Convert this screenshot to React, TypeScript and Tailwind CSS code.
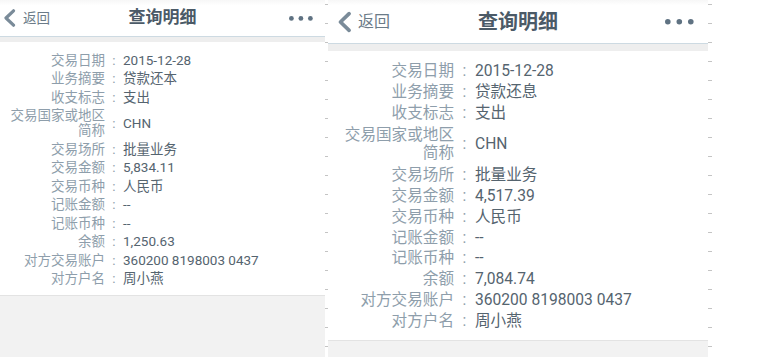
import React from "react";

type Row = { label: string[]; value: string };

const rowsA: Row[] = [
  { label: ["交易日期"], value: "2015-12-28" },
  { label: ["业务摘要"], value: "贷款还本" },
  { label: ["收支标志"], value: "支出" },
  { label: ["交易国家或地区", "简称"], value: "CHN" },
  { label: ["交易场所"], value: "批量业务" },
  { label: ["交易金额"], value: "5,834.11" },
  { label: ["交易币种"], value: "人民币" },
  { label: ["记账金额"], value: "--" },
  { label: ["记账币种"], value: "--" },
  { label: ["余额"], value: "1,250.63" },
  { label: ["对方交易账户"], value: "360200 8198003 0437" },
  { label: ["对方户名"], value: "周小燕" },
];

const rowsB: Row[] = rowsA.map((r, i) =>
  i === 1
    ? { ...r, value: "贷款还息" }
    : i === 5
    ? { ...r, value: "4,517.39" }
    : i === 9
    ? { ...r, value: "7,084.74" }
    : r
);

const font = { fontFamily: 'Roboto, "Noto Sans CJK SC", sans-serif' };

function Ticks() {
  return (
    <div className="flex flex-col gap-[18px] pt-[4px]">
      {Array.from({ length: 19 }).map((_, i) => (
        <div key={i} className="h-px w-[4px] bg-[#c4c4c4]" />
      ))}
    </div>
  );
}

function Chevron({ w, h }: { w: number; h: number }) {
  return (
    <svg width={w} height={h} viewBox="0 0 13 18">
      <path
        d="M10.5 1.8 L3 9 L10.5 16.2"
        fill="none"
        stroke="#7a8b99"
        strokeWidth="3.2"
        strokeLinecap="round"
        strokeLinejoin="round"
      />
    </svg>
  );
}

function Dots({ w, r, gap }: { w: number; r: number; gap: number }) {
  return (
    <svg width={w} height={r * 2 + 2} viewBox={`0 0 ${w} ${r * 2 + 2}`}>
      {[0, 1, 2].map((i) => (
        <circle key={i} cx={r + 1 + i * gap} cy={r + 1} r={r} fill="#5f7282" />
      ))}
    </svg>
  );
}

function PanelSmall() {
  return (
    <div className="flex h-[357px] w-[325px] flex-col bg-[#f2f2f2]" style={font}>
      <div className="flex h-[37px] items-center bg-white bg-gradient-to-b from-[#f7f7f7] to-white to-[15%] border-b border-[#cddae2]">
        <div className="flex w-[100px] items-center pl-[3px]">
          <Chevron w={13} h={18} />
          <span className="ml-[7px] text-[13.5px] text-[#6b7b88]">返回</span>
        </div>
        <div className="flex-1 text-center text-[17px] font-bold text-[#4b5a67]">查询明细</div>
        <div className="flex w-[100px] justify-end pr-[11px]">
          <Dots w={26} r={2.4} gap={9.5} />
        </div>
      </div>
      <div className="h-[5px] bg-[#eeeeee]" />
      <div className="flex flex-col bg-white pt-[8.75px] pb-[7px] border-b border-[#e3e3e3]">
        {rowsA.map((r, i) => (
          <div
            key={i}
            className={`flex items-center ${r.label.length > 1 ? "py-[1.75px]" : "py-[1.75px]"}`}
          >
            <div className="w-[105px] text-right text-[13.5px] leading-[15px] text-[#8e9eab]">
              {r.label.map((l, j) => (
                <div key={j}>{l}</div>
              ))}
            </div>
            <div className="w-[18px] text-center text-[13.5px] leading-[15px] text-[#8e9eab]">:</div>
            <div className="text-[13.5px] leading-[15px] text-[#55646f]">{r.value}</div>
          </div>
        ))}
      </div>
      <div className="flex-1" />
    </div>
  );
}

function PanelLarge() {
  return (
    <div className="flex h-[357px] w-[380px] flex-col bg-[#f2f2f2]" style={font}>
      <div className="flex h-[44px] items-center bg-white bg-gradient-to-b from-[#f7f7f7] to-white to-[12%] border-b border-[#cddae2]">
        <div className="flex w-[110px] items-center pl-[9px] pt-[1px]">
          <Chevron w={15} h={22} />
          <span className="ml-[6px] text-[16px] text-[#6b7b88]">返回</span>
        </div>
        <div className="flex-1 text-center text-[20px] font-bold text-[#4b5a67]">查询明细</div>
        <div className="flex w-[110px] justify-end pr-[12px]">
          <Dots w={32} r={2.8} gap={11.5} />
        </div>
      </div>
      <div className="h-[7px] bg-[#eeeeee]" />
      <div className="flex flex-col bg-white pt-[9.6px] pb-[8.6px] border-b border-[#e3e3e3]">
        {rowsB.map((r, i) => (
          <div
            key={i}
            className={`flex items-center ${r.label.length > 1 ? "py-[3px]" : "py-[1.4px]"}`}
          >
            <div className="w-[126px] text-right text-[15.6px] leading-[18px] text-[#8e9eab]">
              {r.label.map((l, j) => (
                <div key={j}>{l}</div>
              ))}
            </div>
            <div className="w-[21px] text-center text-[15.6px] leading-[18px] text-[#8e9eab]">:</div>
            <div className="text-[15.6px] leading-[18px] text-[#55646f]">{r.value}</div>
          </div>
        ))}
      </div>
      <div className="flex-1" />
    </div>
  );
}

export default function App() {
  return (
    <div className="flex h-[357px] w-[776px] overflow-hidden bg-white">
      <PanelSmall />
      <div className="w-[3px]">
        <Ticks />
      </div>
      <PanelLarge />
      <div className="flex-1">
        <Ticks />
      </div>
    </div>
  );
}
